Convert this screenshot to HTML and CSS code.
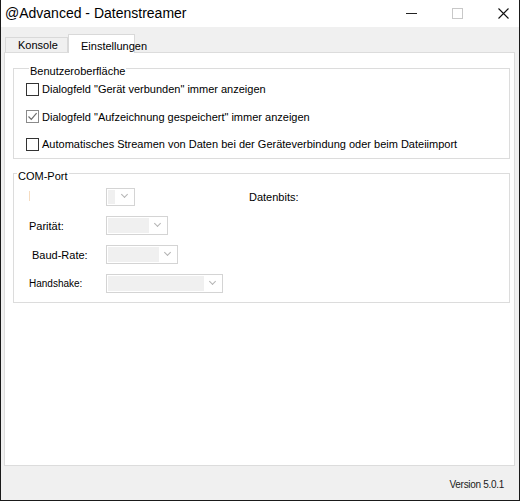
FILE: index.html
```html
<!DOCTYPE html>
<html lang="de">
<head>
  <meta charset="UTF-8">
  <title>@Advanced - Datenstreamer</title>
  <link rel="stylesheet" href="styles.css">
</head>
<body>

  <div class="window">
    <div class="titlebar">
      <span class="title">@Advanced - Datenstreamer</span>
      <div class="controls">
        <span class="ctl ctl-min"></span>
        <span class="ctl ctl-max"></span>
        <svg class="ctl-close" width="11" height="11" viewBox="0 0 11 11">
          <path d="M0.5 0.5 L10.5 10.5 M10.5 0.5 L0.5 10.5" stroke="#111" stroke-width="1.1" fill="none"/>
        </svg>
      </div>
    </div>

    <div class="tabs">
      <div class="tab">Konsole</div>
      <div class="tab tab-active">Einstellungen</div>
    </div>

    <div class="panel">
      <fieldset class="group">
        <legend>Benutzeroberfläche</legend>
        <label class="check">
          <span class="box"></span>
          Dialogfeld "Gerät verbunden" immer anzeigen
        </label>
        <label class="check">
          <span class="box box-checked">
            <svg width="11" height="11" viewBox="0 0 11 11">
              <path d="M1.5 5.5 L4.3 8.4 L9.6 2.2" stroke="#6d6d6d" stroke-width="1.2" fill="none"/>
            </svg>
          </span>
          Dialogfeld "Aufzeichnung gespeichert" immer anzeigen
        </label>
        <label class="check">
          <span class="box"></span>
          Automatisches Streamen von Daten bei der Geräteverbindung oder beim Dateiimport
        </label>
      </fieldset>

      <fieldset class="group group-com">
        <legend>COM-Port</legend>
        <div class="row">
          <span class="lbl"><span class="stub"></span></span>
          <span class="combo combo-xs"><span class="fill"></span><span class="arrow"></span></span>
          <span class="datenbits">Datenbits:</span>
        </div>
        <div class="row">
          <span class="lbl lbl-paritaet">Parität:</span>
          <span class="combo combo-s"><span class="fill"></span><span class="arrow"></span></span>
        </div>
        <div class="row">
          <span class="lbl lbl-baud">Baud-Rate:</span>
          <span class="combo combo-m"><span class="fill"></span><span class="arrow"></span></span>
        </div>
        <div class="row">
          <span class="lbl lbl-hs">Handshake:</span>
          <span class="combo combo-l"><span class="fill"></span><span class="arrow"></span></span>
        </div>
      </fieldset>
    </div>

    <div class="statusbar">
      <span class="version">Version 5.0.1</span>
    </div>
  </div>

</body>
</html>
```

FILE: styles.css
```css
html {
  font-family: 'Liberation Sans', Arial, sans-serif;
  font-size: 11px;
  color: #000;
  background: #fff;
}

body {
  margin: 0;
}

.window {
  width: 520px;
  height: 501px;
  box-sizing: border-box;
  border: 1px solid #1a1a1a;
  border-top: none;
  background: #f0f0f0;
  display: flex;
  flex-direction: column;
}

.titlebar {
  height: 27px;
  background: #fff;
  display: flex;
  align-items: center;
  justify-content: space-between;
  padding-left: 4px;
}

.title {
  font-size: 14px;
  padding-bottom: 1px;
}

.controls {
  display: flex;
  align-items: center;
  height: 100%;
}

.ctl-min {
  width: 11px;
  height: 1px;
  background: #222;
  margin-right: 35px;
}

.ctl-max {
  width: 9px;
  height: 9px;
  border: 1px solid #c8c8c8;
  margin-right: 35px;
}

.ctl-close {
  margin-right: 10px;
}

.tabs {
  height: 25px;
  display: flex;
  align-items: flex-end;
  padding-left: 4px;
}

.tab {
  width: 63px;
  height: 15px;
  box-sizing: border-box;
  border: 1px solid #d9d9d9;
  border-bottom: none;
  background: #f0f0f0;
  padding: 1px 0 0 12px;
  line-height: 12px;
  white-space: nowrap;
}

.tab-active {
  width: 67px;
  height: 19px;
  background: #fff;
  padding: 5px 0 0 12px;
  margin-bottom: -1px;
  position: relative;
}

.panel {
  flex: 1;
  margin: 0 4px 0 3px;
  background: #fff;
  border: 1px solid #dcdcdc;
  padding: 0 4px 0 8px;
}

.group {
  margin: 7px 0 0 0;
  padding: 0 0 2px 12px;
  border: 1px solid #dcdcdc;
  min-width: 0;
}

.group legend {
  padding: 6px 1px 0 1px;
  margin-left: 3px;
  line-height: 11px;
}

.check {
  display: flex;
  align-items: center;
  height: 24px;
  gap: 3px;
  white-space: nowrap;
}

.check + .check {
  margin-top: 3.5px;
}

.box {
  width: 13px;
  height: 13px;
  box-sizing: border-box;
  border: 1px solid #333;
  background: #fff;
  display: flex;
  align-items: center;
  justify-content: center;
}

.box-checked {
  border-color: #8a8a8a;
}

.group-com {
  margin-top: 6px;
  padding: 0 0 4px 0;
}

.row {
  display: flex;
  align-items: center;
  height: 29px;
}

.lbl {
  width: 92px;
  box-sizing: border-box;
  padding-left: 15px;
  white-space: nowrap;
}

.lbl-baud {
  padding-left: 18px;
}

.lbl-hs {
  font-size: 10px;
}

.stub {
  display: inline-block;
  width: 1px;
  height: 10px;
  background: #f6dcc0;
}

.combo {
  height: 19px;
  box-sizing: border-box;
  border: 1px solid #d4d4d4;
  display: flex;
  padding: 1px;
}

.combo .fill {
  flex: 1;
  background: #f0f0f0;
}

.combo .arrow {
  width: 17px;
  display: flex;
  align-items: center;
  justify-content: center;
}

.combo .arrow::before {
  content: "";
  width: 4px;
  height: 4px;
  border-right: 1px solid #b4b4b4;
  border-bottom: 1px solid #b4b4b4;
  transform: translateY(-2px) rotate(45deg);
}

.combo-xs {
  width: 29px;
  height: 18px;
}

.combo-xs .arrow {
  width: 18px;
}

.combo-s {
  width: 62px;
}

.combo-m {
  width: 72px;
}

.combo-l {
  width: 117px;
}

.datenbits {
  margin-left: 114px;
}

.statusbar {
  height: 34px;
  display: flex;
  align-items: center;
  justify-content: flex-end;
  padding-right: 15px;
  padding-top: 2px;
  box-sizing: border-box;
}

.version {
  font-size: 10px;
  letter-spacing: -0.3px;
  color: #1a1a1a;
}
```
